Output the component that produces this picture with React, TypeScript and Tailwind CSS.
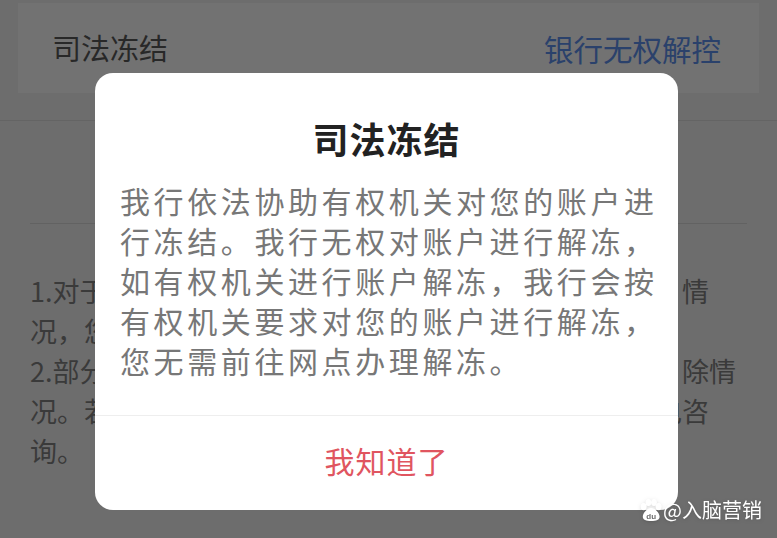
const cjk = { fontFamily: '"Noto Sans CJK SC", "Noto Sans", sans-serif' };

const rows = [
  { left: '1.对于', right: '情', w: 'w-[95px]' },
  { left: '况，您', right: '', w: 'w-[95px]' },
  { left: '2.部分', right: '除情', w: 'w-[95px]' },
  { left: '况。若', right: '电咨', w: 'w-[122px]' },
  { left: '询。', right: '', w: 'w-[95px]' },
];

const Paw = () => (
  <svg className="shrink-0 w-[22px] h-[22px]" viewBox="0 0 22 22" fill="#fff">
    <ellipse cx="3.6" cy="7.6" rx="3" ry="3.6" />
    <ellipse cx="8.4" cy="3.6" rx="2.9" ry="3.5" />
    <ellipse cx="14" cy="3.6" rx="2.9" ry="3.5" />
    <ellipse cx="18.6" cy="7.6" rx="3" ry="3.6" />
    <path d="M11.2 9c-3.8 0-8.4 5-8.4 8.8 0 3 3.3 4.2 8.4 4.2s8.4-1.2 8.4-4.2C19.6 14 15 9 11.2 9z" />
    <text x="11.2" y="20.2" fontSize="8" fontWeight="700" fill="#6d6d6d" textAnchor="middle" fontFamily="Liberation Sans, sans-serif">du</text>
  </svg>
);

export default function App() {
  return (
    <div className="relative w-[777px] h-[538px] overflow-hidden bg-[#6d6d6d]" style={cjk}>
      {/* page behind the mask */}
      <div className="h-[121px] pt-[5px] px-[18px] border-b border-[#646464]">
        <div className="h-[90px] bg-[#727272] flex items-center justify-between pl-[34px] pr-[38px] -mt-[2px]">
          <span className="text-[29px] text-[#282828]">司法冻结</span>
          <span className="text-[29.5px] text-[#2a416b]">银行无权解控</span>
        </div>
      </div>
      <div className="mx-[30px] mt-[102px] border-t border-[#626262]" />
      <div className="pt-[46px] flex flex-col">
        {rows.map((r, i) => (
          <div key={i} className="h-[40px] flex items-center pl-[30px] text-[27px] text-[#3a3a3a] leading-none">
            <span>{r.left}</span>
            <span className={`ml-auto ${r.w}`}>{r.right}</span>
          </div>
        ))}
      </div>

      {/* dialog */}
      <div className="absolute left-[95px] top-[73px] w-[583px] h-[437px] bg-white rounded-[18px] flex flex-col">
        <h1 className="pt-[43px] text-center text-[36px] font-bold text-[#222] leading-[44px] tracking-[1px]">司法冻结</h1>
        <p className="mt-[20px] pl-[25px] whitespace-nowrap text-[30px] leading-[40px] tracking-[3.6px] text-[#777]">
          我行依法协助有权机关对您的账户进<br />
          行冻结。我行无权对账户进行解冻，<br />
          如有权机关进行账户解冻，我行会按<br />
          有权机关要求对您的账户进行解冻，<br />
          您无需前往网点办理解冻。
        </p>
        <div className="mt-auto border-t border-[#eeeeee] h-[95px] flex items-center justify-center pb-[6px]">
          <span className="text-[30px] text-[#e05560] tracking-[1px]">我知道了</span>
        </div>
      </div>

      {/* watermark */}
      <div className="absolute left-[640px] top-[499px] flex items-center gap-[1px] text-white text-[20px] leading-none whitespace-nowrap drop-shadow">
        <Paw />
        <span>@入脑营销</span>
      </div>
    </div>
  );
}
